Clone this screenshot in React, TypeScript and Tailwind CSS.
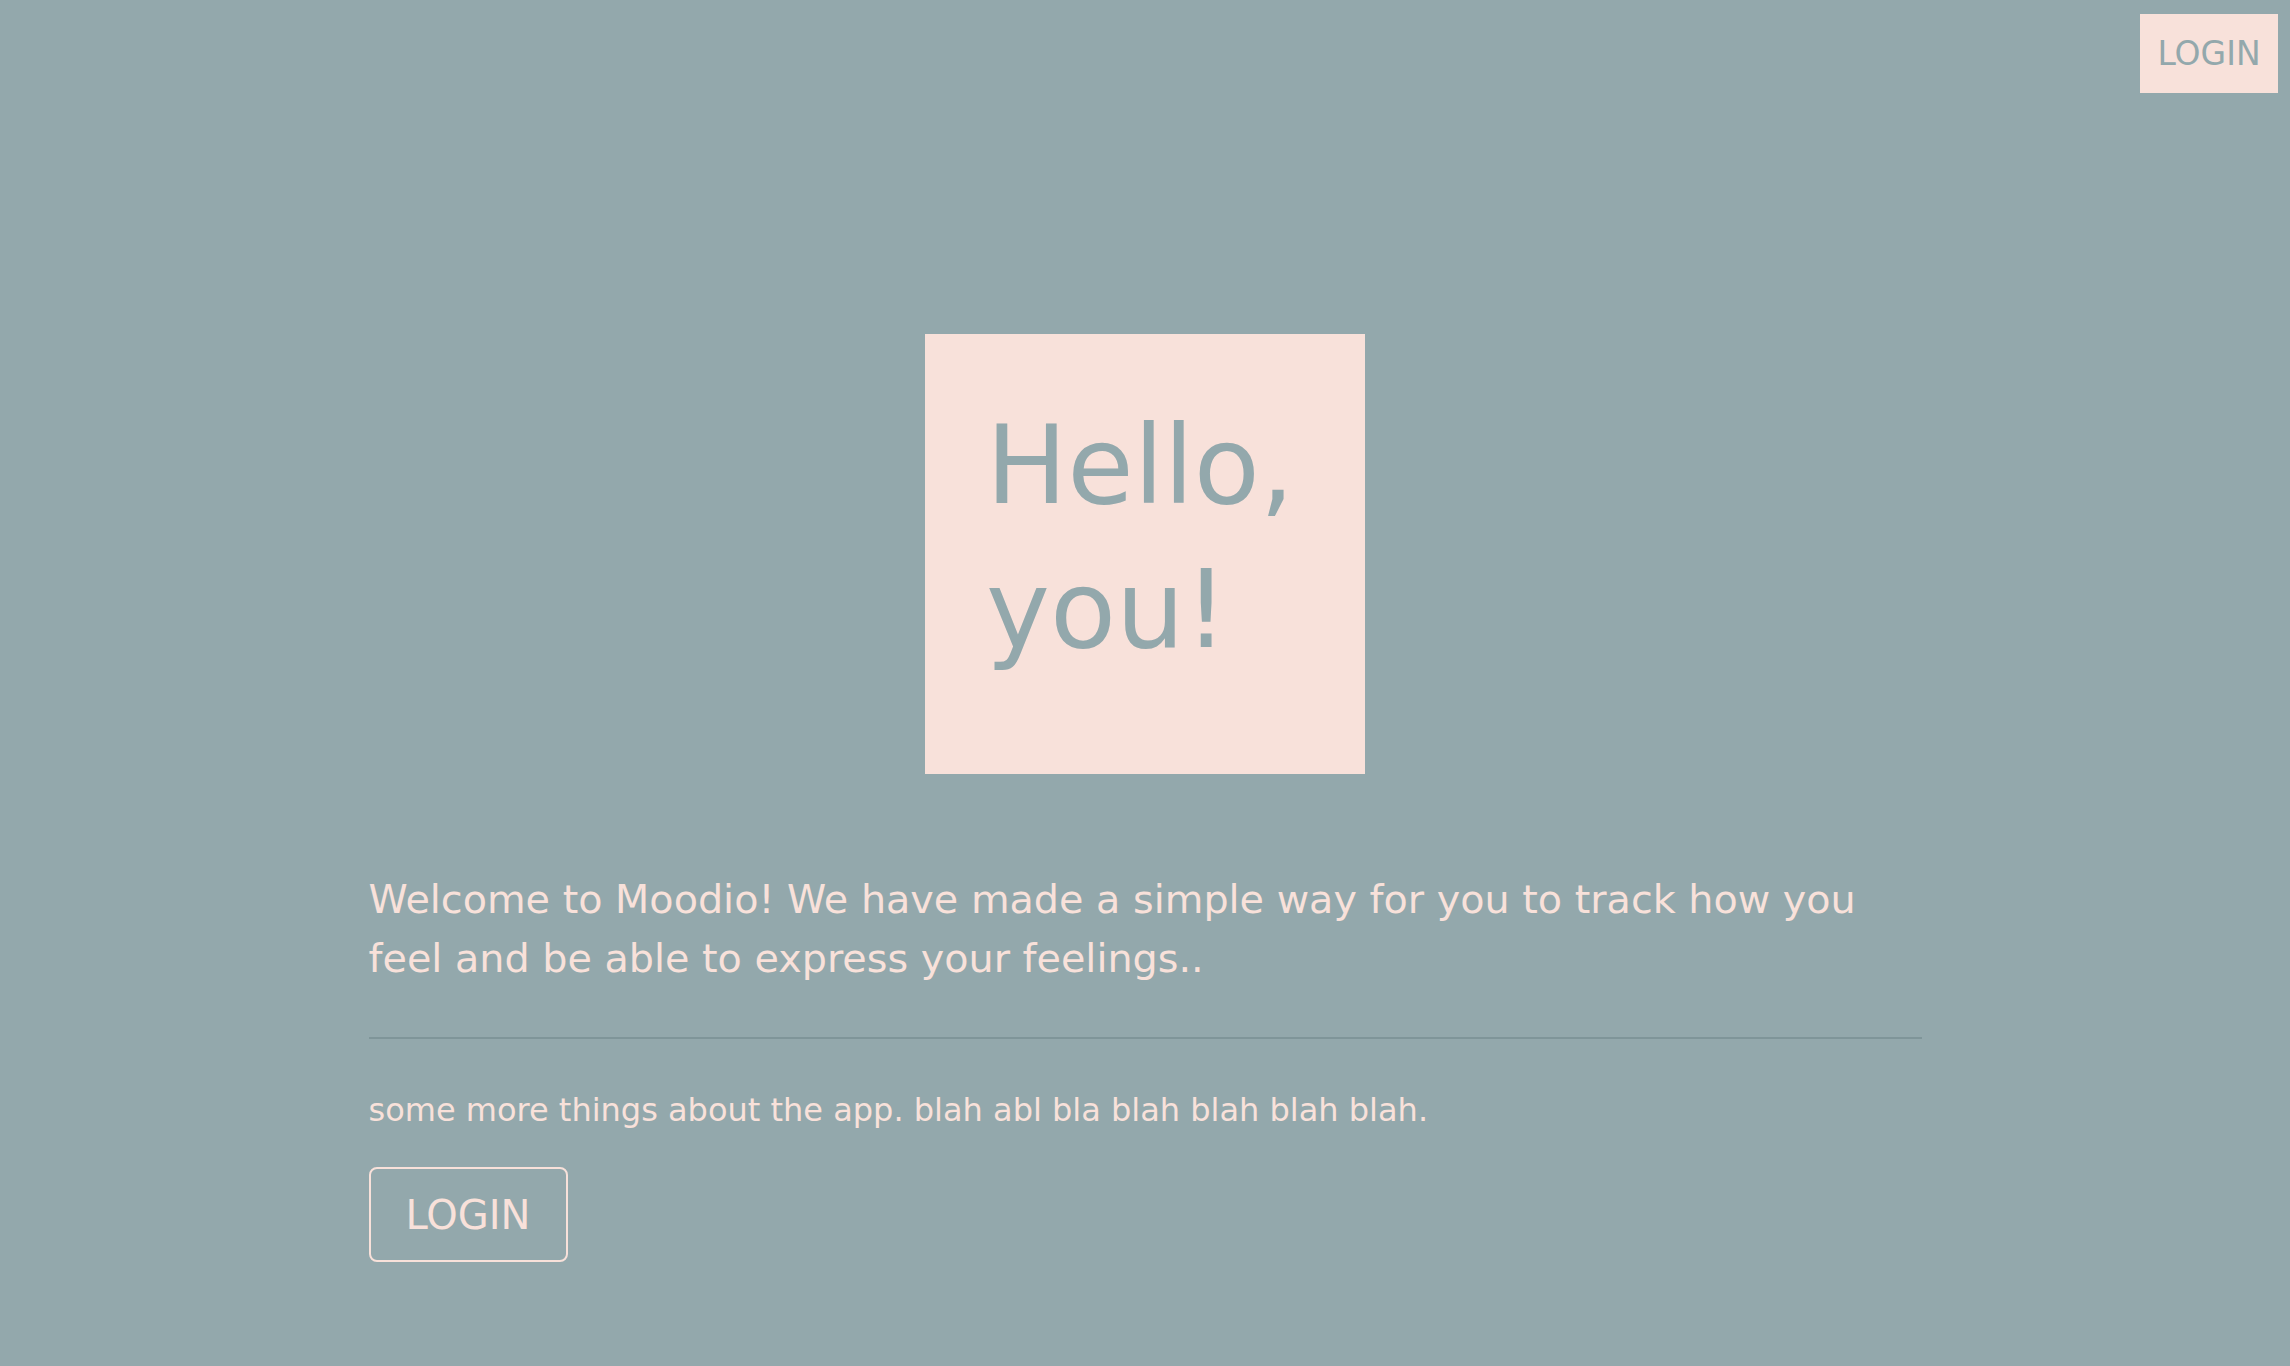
export default function App() {
  return (
    <div className="min-h-[1366px] bg-[#93a8ac] font-['DejaVu_Sans',sans-serif] text-[#f8e1da]">
      <header className="flex justify-end pt-[14px] pr-[12px]">
        <button className="h-[79px] w-[138px] bg-[#f8e1da] text-[33px] text-[#93a8ac]">LOGIN</button>
      </header>

      <main className="mx-auto w-[1553px]">
        <div className="mx-auto mt-[241px] h-[440px] w-[440px] bg-[#f8e1da] pl-[61px] pt-[60px]">
          <h1 className="text-[108px] leading-[144px] text-[#93a8ac]">
            Hello,
            <br />
            you!
          </h1>
        </div>

        <p className="mt-[96px] text-[39.7px] leading-[59px]">
          Welcome to Moodio! We have made a simple way for you to track how you feel and be able to express your feelings..
        </p>

        <hr className="mt-[49px] border-t-2 border-[#7f9599]" />

        <p className="mt-[51px] text-[32px] leading-[40px]">
          some more things about the app. blah abl bla blah blah blah blah.
        </p>

        <button className="mt-[37px] h-[95px] w-[199px] rounded-[8px] border-2 border-[#f8e1da] text-[40px]">
          LOGIN
        </button>
      </main>
    </div>
  )
}
